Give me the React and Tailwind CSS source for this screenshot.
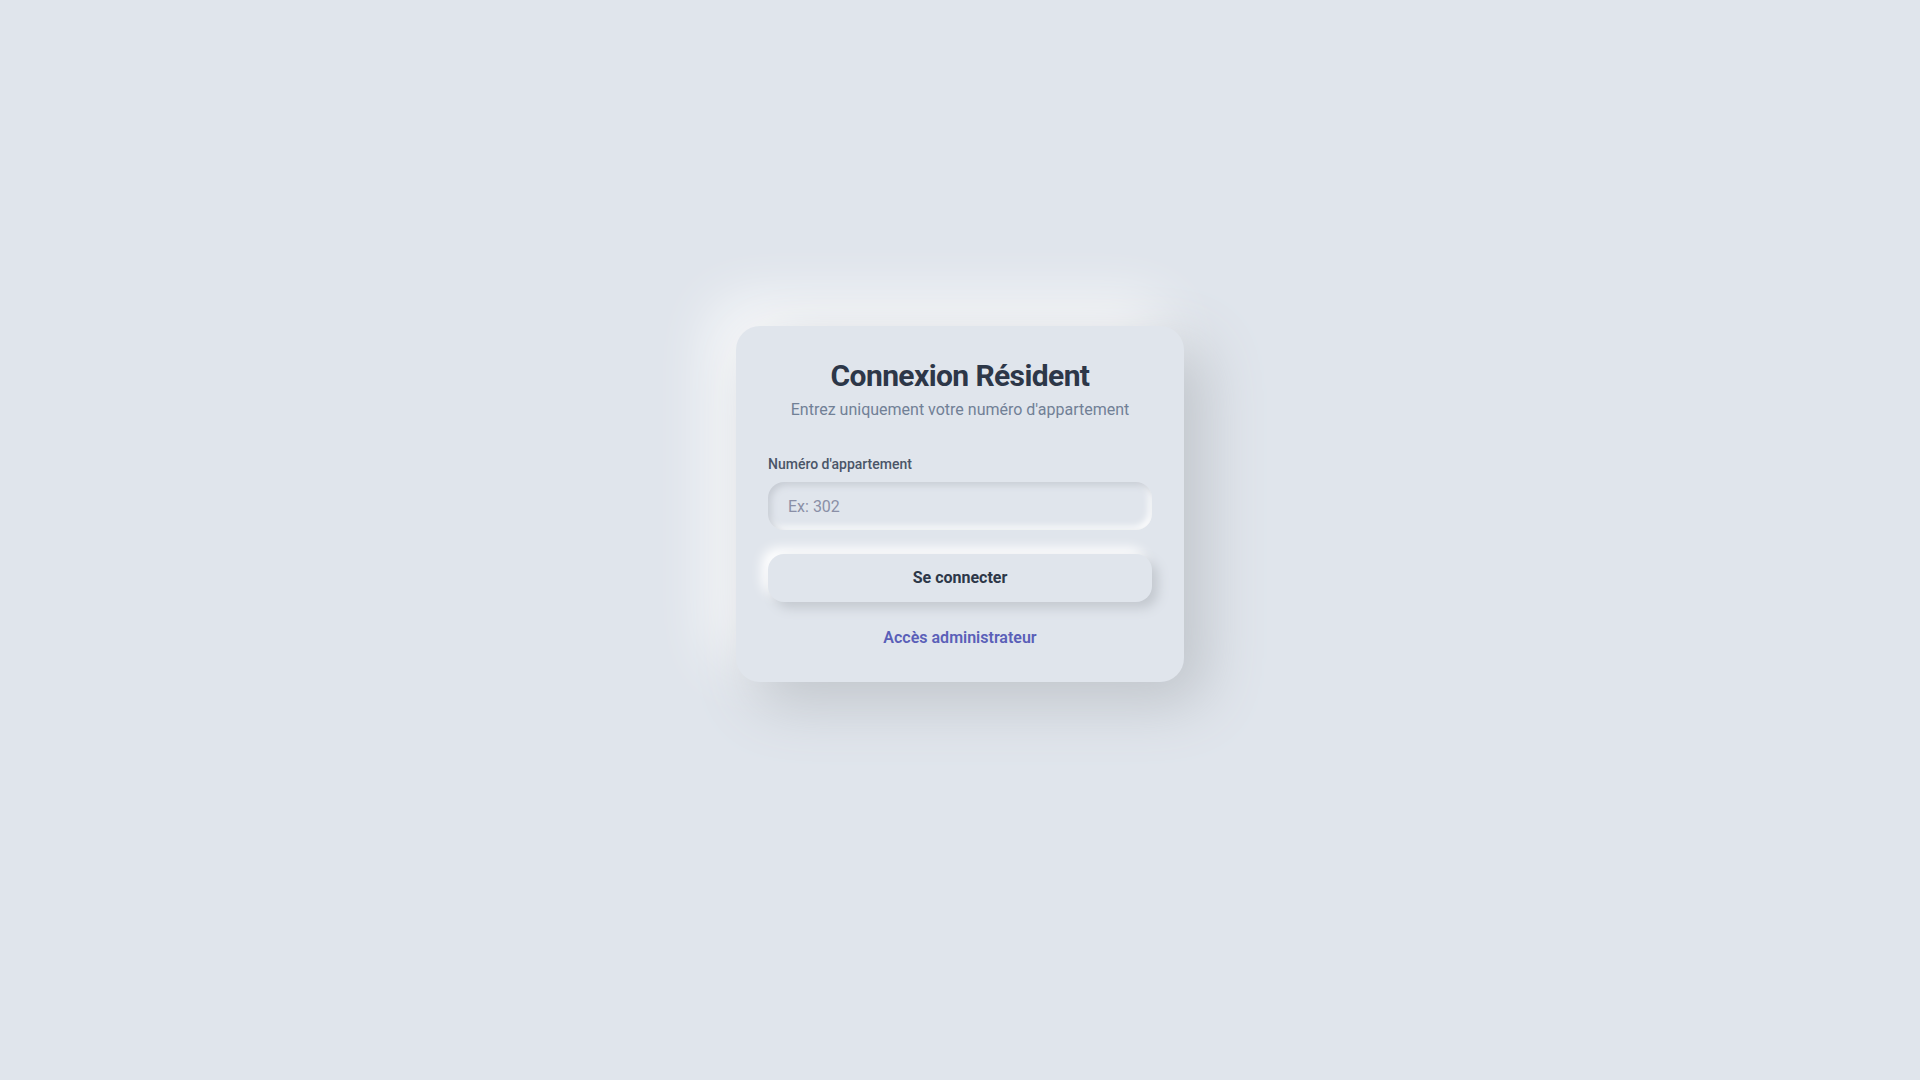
export default function App() {
  return (
    <div
      className="min-h-screen w-full bg-[#e0e5ec] flex items-center justify-center pb-[72px]"
      style={{ fontFamily: 'Roboto, "Liberation Sans", sans-serif' }}
    >
      <div className="w-[448px] rounded-[24px] bg-[#e0e5ec] p-8 shadow-[20px_20px_60px_#bec3c9,-20px_-20px_60px_#ffffff]">
        <div className="mb-8 text-center">
          <h1 className="text-[30px] leading-9 font-bold tracking-[-0.02em] text-[#2d3748]">
            Connexion Résident
          </h1>
          <p className="mt-1 text-base leading-6 text-[#718096]">
            Entrez uniquement votre numéro d'appartement
          </p>
        </div>
        <label className="mb-2 block text-sm leading-5 font-medium text-[#4a5568]">
          Numéro d'appartement
        </label>
        <input
          type="text"
          placeholder="Ex: 302"
          className="block h-12 w-full rounded-2xl bg-[#e0e5ec] px-5 text-base text-[#2d3748] placeholder:text-[#8a8fa6] outline-none shadow-[inset_3px_3px_7px_#c6cbd3,inset_-3px_-3px_7px_#ffffff]"
        />
        <button className="mt-6 block h-12 w-full rounded-2xl bg-[#e0e5ec] text-base font-bold text-[#2d3748] shadow-[6px_6px_12px_#c3c8cf,-6px_-6px_12px_#ffffff]">
          Se connecter
        </button>
        <div className="mt-6 text-center">
          <a href="#" className="text-base leading-6 font-semibold text-[#5a5fb8]">
            Accès administrateur
          </a>
        </div>
      </div>
    </div>
  );
}
